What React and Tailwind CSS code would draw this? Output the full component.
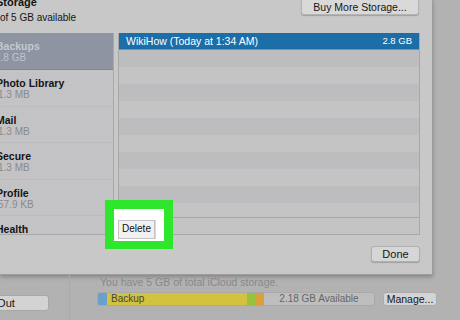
import React from "react";

const apps = [
  { name: "Backups", size: "2.8 GB", selected: true },
  { name: "Photo Library", size: "1.3 MB" },
  { name: "Mail", size: "1.3 MB" },
  { name: "Secure", size: "1.3 MB" },
  { name: "Profile", size: "57.9 KB" },
  { name: "Health", size: "12 KB" },
];

export default function App() {
  const stripes = Array.from({ length: 10 });

  return (
    <div
      className="relative w-[460px] h-[320px] overflow-hidden bg-[#b2b2b2] text-[#151515]"
      style={{ fontFamily: '"Liberation Sans", Arial, sans-serif' }}
    >
      {/* sheet */}
      <div className="w-[433px] h-[275px] bg-[#c8c8c8] flex flex-col border-r border-b border-[#9c9c9c] shadow-[0_2px_4px_rgba(0,0,0,0.25)]">
        <div className="h-[33px] flex justify-between">
          <div className="-ml-[4px]">
            <div className="text-[11px] font-bold leading-[11px] -mt-[3px]">Storage</div>
            <div className="text-[10px] leading-[12px] mt-[4px] ml-[4px]">of 5 GB available</div>
          </div>
          <button className="mr-[13px] w-[118px] h-[15px] rounded-b-[3px] bg-[#d9d9d9] border border-t-0 border-[#b4b4b4] shadow-[0_1px_1px_rgba(0,0,0,0.2)] text-[10.5px] leading-[12px]">
            Buy More Storage...
          </button>
        </div>

        <div className="flex h-[202px]">
          {/* sidebar */}
          <div className="w-[114px] bg-[#c3c3c5] border-r border-b border-[#a9a9ab] overflow-hidden">
            {apps.map((a) => (
              <div
                key={a.name}
                className={
                  a.selected
                    ? "h-[37px] pt-[7px] -ml-[4px] bg-[#8e94a2] border-b border-[#7f8593]"
                    : "h-[36.5px] pt-[7px] -ml-[4px] border-b border-[#bbbbbd]"
                }
              >
                <div
                  className={
                    a.selected
                      ? "text-[10.5px] leading-[12px] font-bold text-[#c5c8d0]"
                      : "text-[10.5px] leading-[12px] font-bold text-[#141414]"
                  }
                >
                  {a.name}
                </div>
                <div
                  className={
                    a.selected
                      ? "-ml-[1px] text-[10px] leading-[12px] text-[#bfc3cc]"
                      : "ml-[2px] text-[10px] leading-[12px] text-[#8a8a8c]"
                  }
                >
                  {a.size}
                </div>
              </div>
            ))}
          </div>

          {/* backup list */}
          <div className="ml-[4px] w-[302px] flex flex-col border-l border-r border-[#a8a8a8] bg-[#c3c3c3]">
            <div className="h-[17px] bg-[#1b6ea7] flex items-center justify-between pl-[7px] pr-[7px] text-white border-b border-[#5f97c0]">
              <span className="text-[10.5px] leading-[12px]">WikiHow (Today at 1:34 AM)</span>
              <span className="text-[9.5px] leading-[12px]">2.8 GB</span>
            </div>
            <div className="h-[167px] overflow-hidden">
              {stripes.map((_, i) => (
                <div
                  key={i}
                  className={i % 2 === 0 ? "h-[17px] bg-[#bdbdbf]" : "h-[17px] bg-[#c4c4c4]"}
                />
              ))}
            </div>
            <div className="flex-1 bg-[#c4c4c4] border-t border-b border-[#a6a6a6]" />
          </div>
        </div>

        <div className="flex-1 flex justify-end pt-[11px] pr-[12px]">
          <button className="w-[49px] h-[16px] rounded-[3px] bg-[#d6d6d6] border border-[#b0b0b0] shadow-[0_1px_1px_rgba(0,0,0,0.2)] text-[11px] leading-[12px]">
            Done
          </button>
        </div>
      </div>

      {/* below the sheet */}
      <div className="flex h-[45px]">
        <div className="w-[70px] border-r border-[#a9a9a9] pt-[15px]">
          <button className="w-[89px] h-[16px] -ml-[40px] rounded-[3px] bg-[#d3d3d3] border border-[#a8a8a8] text-[11px] leading-[12px] text-left pl-[11px]">
            Sign Out
          </button>
        </div>
        <div className="pl-[27px] pt-[1px]">
          <div className="text-[10.5px] leading-[12px] text-[#888888] ml-[3px]">
            You have 5 GB of total iCloud storage.
          </div>
          <div className="flex items-center mt-[4px]">
            <div className="w-[278px] h-[14px] flex rounded-[2px] overflow-hidden border border-[#a9a9a9] bg-[#bebebe]">
              <div className="w-[9px] bg-[#6aa1cc]" />
              <div className="w-[140px] bg-[#d2c23e] text-[10px] leading-[12px] text-[#444] pl-[4px]">Backup</div>
              <div className="w-[9px] bg-[#98c13e]" />
              <div className="w-[8px] bg-[#d9a03c]" />
              <div className="flex-1 text-center text-[10px] leading-[12px] text-[#666]">2.18 GB Available</div>
            </div>
            <button className="ml-[8px] w-[54px] h-[14px] rounded-[3px] bg-[#d4d4d4] border border-[#ababab] text-[10.5px] leading-[12px]">
              Manage...
            </button>
          </div>
        </div>
      </div>

      {/* green highlight over the Delete button */}
      <div className="absolute left-[105px] top-[200px] w-[68px] h-[49px] bg-[#2ee62b] p-[9px] pb-[8px]">
        <div className="w-full h-full bg-white pl-[4px] pt-[6px]">
          <button className="w-[37px] h-[19px] bg-[#f1f1f1] border border-[#c4c4c4] shadow-[1px_0_0_#d8d8d8] text-[10px] leading-[12px] font-medium text-[#111]">
            Delete
          </button>
        </div>
      </div>
    </div>
  );
}
